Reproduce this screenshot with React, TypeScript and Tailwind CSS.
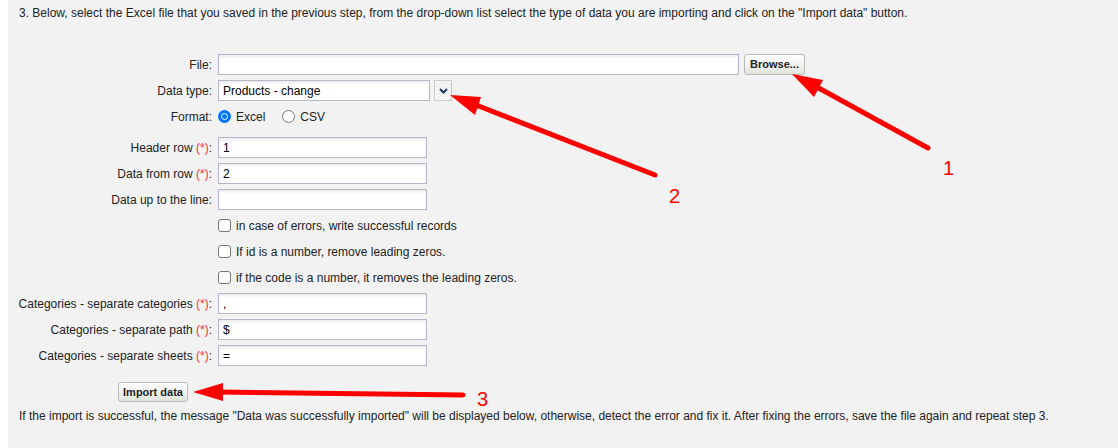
import type { ReactNode } from 'react'

// Step 3 of the product import wizard: file picker, import options and
// the annotated arrows that point at the controls to use.

const FONT = { fontFamily: '"Liberation Sans", Arial, sans-serif' }

function Req() {
  return <span className="text-[#ff3333]">(*)</span>
}

function Row({
  label,
  className = '',
  children,
}: {
  label?: ReactNode
  className?: string
  children: ReactNode
}) {
  return (
    <div className={`flex h-[21px] items-center ${className}`}>
      <div className="w-[205px] shrink-0 pr-[1px] text-right text-[12px] text-[#222]">
        {label}
      </div>
      <div className="ml-[5px] flex items-center">{children}</div>
    </div>
  )
}

function TextBox({ value = '', width = 'w-[209px]' }: { value?: string; width?: string }) {
  return (
    <input
      readOnly
      value={value}
      className={`${width} h-[21px] border border-[#b5b6c9] bg-white px-[4px] text-[12px] text-black shadow-[inset_0_2px_3px_rgba(0,0,0,0.08)] outline-none`}
      style={FONT}
    />
  )
}

function Check({ label }: { label: string }) {
  return (
    <label className="flex items-center gap-[5px] text-[12px] text-[#222]">
      <span className="block h-[13px] w-[13px] rounded-[3px] border border-[#767676] bg-white" />
      {label}
    </label>
  )
}

function Radio({ checked, label }: { checked?: boolean; label: string }) {
  return (
    <label className="flex items-center gap-[5px] text-[12px] text-[#222]">
      {checked ? (
        <span className="flex h-[13px] w-[13px] items-center justify-center rounded-full bg-[#0075ff]">
          <span className="block h-[7px] w-[7px] rounded-full border-[1.5px] border-white bg-[#0075ff]" />
        </span>
      ) : (
        <span className="block h-[13px] w-[13px] rounded-full border border-[#767676] bg-white" />
      )}
      {label}
    </label>
  )
}

function Arrows() {
  return (
    <svg className="pointer-events-none absolute inset-0" width="1110" height="448" viewBox="8 0 1110 448">
      <g stroke="#ff0000" strokeWidth="5" strokeLinecap="round" fill="#ff0000">
        <line x1="928" y1="148" x2="815" y2="86" />
        <line x1="655" y1="175" x2="476" y2="105" />
        <line x1="463" y1="395" x2="218" y2="392" />
      </g>
      <g fill="#ff0000">
        <polygon points="792,74 823,80 814,97" />
        <polygon points="450,95 481,97 475,115" />
        <polygon points="193,392 223,383 223,401" />
      </g>
      <g fill="#ff0000" fontSize="20" style={FONT}>
        <text x="943" y="175">1</text>
        <text x="669" y="203">2</text>
        <text x="477" y="406">3</text>
      </g>
    </svg>
  )
}

export default function App() {
  return (
    <div className="h-[448px] w-[1118px] bg-white pl-[8px]" style={FONT}>
      <div className="relative h-full bg-[#f2f2f2] px-[11px] pt-[6px]">
        <p className="text-[12px] leading-[14px] text-[#222]">
          3. Below, select the Excel file that you saved in the previous step, from the drop-down list
          select the type of data you are importing and click on the "Import data" button.
        </p>

        <div className="-ml-[11px] mt-[34px] flex flex-col gap-[5px]">
          <Row label="File:">
            <TextBox width="w-[521px]" />
            <button
              type="button"
              className="ml-[5px] h-[21px] w-[61px] rounded-[3px] border border-[#b9b9b9] bg-gradient-to-b from-white via-[#f3f3f3] to-[#dfe5d8] text-[11px] font-bold text-[#222]"
            >
              Browse...
            </button>
          </Row>
          <Row label="Data type:">
            <TextBox value="Products - change" width="w-[212px]" />
            <span className="ml-[4px] flex h-[21px] w-[18px] items-center justify-center border border-[#c9cfc9] border-r-[#a9d8b0] bg-[#f3f3f3]">
              <svg width="9" height="6" viewBox="0 0 9 6">
                <path d="M1 1l3.5 3.5L8 1" stroke="#24365e" strokeWidth="2" fill="none" />
              </svg>
            </span>
          </Row>
          <Row label="Format:">
            <div className="flex items-center gap-[17px]">
              <Radio checked label="Excel" />
              <Radio label="CSV" />
            </div>
          </Row>
          <Row className="mt-[5px]" label={<>Header row <Req />:</>}>
            <TextBox value="1" />
          </Row>
          <Row label={<>Data from row <Req />:</>}>
            <TextBox value="2" />
          </Row>
          <Row label="Data up to the line:">
            <TextBox />
          </Row>
          <Row>
            <Check label="in case of errors, write successful records" />
          </Row>
          <Row>
            <Check label="If id is a number, remove leading zeros." />
          </Row>
          <Row>
            <Check label="if the code is a number, it removes the leading zeros." />
          </Row>
          <Row label={<>Categories - separate categories <Req />:</>}>
            <TextBox value="," />
          </Row>
          <Row label={<>Categories - separate path <Req />:</>}>
            <TextBox value="$" />
          </Row>
          <Row label={<>Categories - separate sheets <Req />:</>}>
            <TextBox value="=" />
          </Row>
        </div>

        <button
          type="button"
          className="ml-[99px] mt-[16px] block h-[20px] w-[70px] rounded-[3px] border border-[#b9b9b9] bg-gradient-to-b from-white via-[#f3f3f3] to-[#dfe5d8] text-[11px] font-bold text-[#222]"
        >
          Import data
        </button>
        <p className="mt-[7px] text-[12px] leading-[14px] text-[#222]">
          If the import is successful, the message "Data was successfully imported" will be displayed
          below, otherwise, detect the error and fix it. After fixing the errors, save the file again
          and repeat step 3.
        </p>

        <Arrows />
      </div>
    </div>
  )
}
